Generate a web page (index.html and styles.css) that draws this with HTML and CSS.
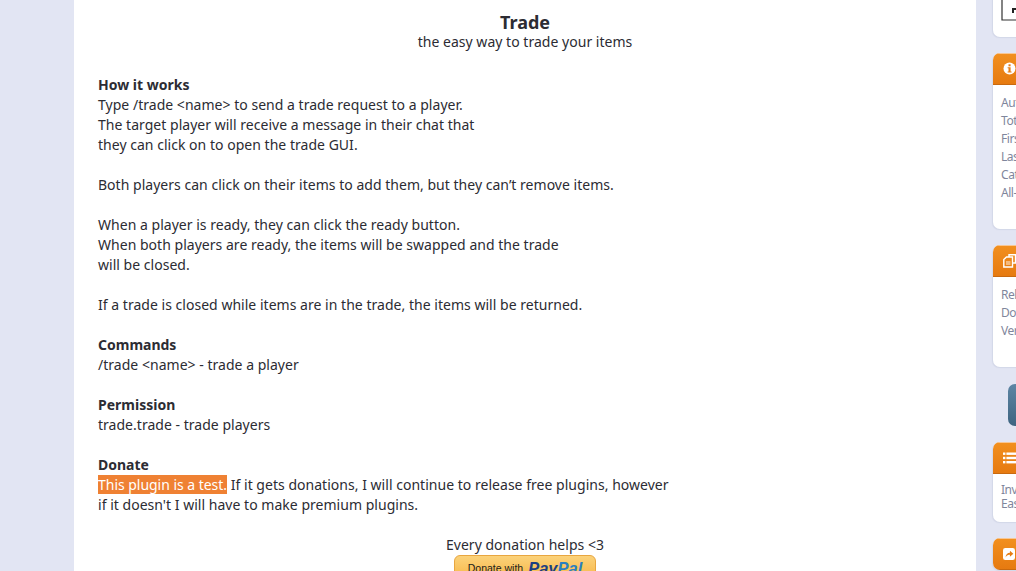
FILE: index.html
```html
<!DOCTYPE html>
<html lang="en">
<head>
<meta charset="utf-8">
<title>Trade</title>
<link rel="stylesheet" href="styles.css">
</head>
<body>
<div class="page">
  <main class="post">
    <div class="center intro">
      <div class="title">Trade</div>
      <div>the easy way to trade your items</div>
    </div>
    <br>
    <div><b>How it works</b></div>
    <div>Type /trade &lt;name&gt; to send a trade request to a player.</div>
    <div>The target player will receive a message in their chat that</div>
    <div>they can click on to open the trade GUI.</div>
    <br>
    <div>Both players can click on their items to add them, but they can’t remove items.</div>
    <br>
    <div>When a player is ready, they can click the ready button.</div>
    <div>When both players are ready, the items will be swapped and the trade</div>
    <div>will be closed.</div>
    <br>
    <div>If a trade is closed while items are in the trade, the items will be returned.</div>
    <br>
    <div><b>Commands</b></div>
    <div>/trade &lt;name&gt; - trade a player</div>
    <br>
    <div><b>Permission</b></div>
    <div>trade.trade - trade players</div>
    <br>
    <div><b>Donate</b></div>
    <div><span class="mark">This plugin is a test.</span> If it gets donations, I will continue to release free plugins, however</div>
    <div>if it doesn't I will have to make premium plugins.</div>
    <br>
    <div class="center">Every donation helps &lt;3</div>
    <div class="center donate-row">
      <div class="paypal"><span class="pp-label">Donate with</span> <span class="pp-logo"><i>Pay</i><i class="pal">Pal</i></span></div>
    </div>
  </main>
  <aside class="side">
    <section class="card card-top">
      <svg class="qr" width="24" height="21" viewBox="0 0 24 21"><path d="M1 0V20H24" fill="none" stroke="#333" stroke-width="1.2"/><path d="M11 8h13v2H13v3h-2z" fill="#222"/></svg>
    </section>
    <section class="card">
      <header class="head"><svg width="13" height="13" viewBox="0 0 13 13"><circle cx="6.5" cy="6.5" r="6" fill="#fff"/><path d="M4.6 5.2H7.6V9.6H8.6V10.6H4.6V9.6H5.5V6.2H4.6Z" fill="#e67d14"/><rect x="5.5" y="2.3" width="2.1" height="2" fill="#e67d14"/></svg></header>
      <div class="body tall">
        <div>Author:</div><div>Total Downloads:</div><div>First Release:</div><div>Last Update:</div><div>Category:</div><div>All-Time Rating:</div>
      </div>
    </section>
    <section class="card">
      <header class="head"><svg width="14" height="14" viewBox="0 0 14 14"><path d="M6 3V0.8H12.5V9H10" fill="none" stroke="#fff" stroke-width="1.4"/><path d="M0.8 5.5L3.5 3H9.5V13H0.8Z" fill="none" stroke="#fff" stroke-width="1.4"/><path d="M3 7H7.5V11H3Z" fill="#fff" fill-opacity=".45"/></svg></header>
      <div class="body mid">
        <div>Release:</div><div>Download:</div><div>Version:</div>
      </div>
    </section>
    <div class="btn-row"><div class="blue-btn"></div></div>
    <section class="card">
      <header class="head"><svg width="14" height="12" viewBox="0 0 14 12"><g fill="#fff"><rect x="0" y="0.5" width="2.4" height="2.4"/><rect x="0" y="4.8" width="2.4" height="2.4"/><rect x="0" y="9" width="2.4" height="2.4"/><rect x="3.4" y="0.5" width="11" height="2.4"/><rect x="3.4" y="4.8" width="11" height="2.4"/><rect x="3.4" y="9" width="11" height="2.4"/></g></svg></header>
      <div class="body low">
        <div>Inventory</div><div>Easy</div>
      </div>
    </section>
    <section class="card">
      <header class="head"><svg width="12" height="12" viewBox="0 0 13 13"><rect width="13" height="13" rx="2.5" fill="#fff"/><path d="M2.8 10.2C2.8 7 5 5.2 7.5 5.2V3L11.2 6.3 7.5 9.6V7.4C6 7.4 3.8 8 2.8 10.2Z" fill="#e67d14"/></svg></header>
    </section>
  </aside>
</div>
</body>
</html>
```
FILE: styles.css
```css
html, body {
  margin: 0;
  height: 100%;
  overflow: hidden;
  background: #e2e5f3;
}
.page {
  display: flex;
  align-items: flex-start;
  height: 571px;
  overflow: hidden;
  padding-left: 74px;
  font-family: "Noto Sans", sans-serif;
}
.post {
  flex: none;
  box-sizing: border-box;
  width: 902px;
  height: 571px;
  padding: 12px 24px 0;
  background: #fff;
  color: #2c2c33;
  font-size: 14px;
  line-height: 20px;
  letter-spacing: 0.025px;
  overflow: hidden;
}
.center { text-align: center; }
.intro { padding-bottom: 3px; }
.title { font-size: 18px; font-weight: 700; letter-spacing: 0; }
b { font-weight: 700; letter-spacing: 0; }
.mark { background: #ef8133; color: #fff; letter-spacing: -0.03px; }
.donate-row { display: flex; justify-content: center; }
.paypal {
  box-sizing: border-box;
  width: 142px;
  height: 26px;
  border: 1px solid #e8a640;
  border-radius: 6px;
  background: linear-gradient(#fbd27a, #f7b545);
  color: #1a1a1a;
  font-family: "Liberation Sans", sans-serif;
  font-size: 10.5px;
  line-height: 24px;
  display: flex;
  justify-content: center;
  gap: 5px;
  letter-spacing: 0;
}
.pp-logo { font-size: 16.5px; font-weight: 700; color: #1b3f82; line-height: 24px; }
.pp-logo .pal { color: #2a7fc0; }
.side {
  flex: none;
  margin: -24px 0 0 17px;
  width: 120px;
  display: flex;
  flex-direction: column;
  gap: 16px;
}
.card {
  background: #fff;
  border-radius: 7px;
  overflow: hidden;
  box-shadow: -1px 1px 1px #d3d7e8;
}
.card-top {
  height: 61px;
  padding: 24px 0 0 8px;
  box-sizing: border-box;
}
.qr { display: block; }
.head {
  height: 32px;
  background: linear-gradient(#f2901f, #e67a10);
  border-bottom: 1px solid #c9690f;
  box-shadow: inset 0 1px 0 #f8c795;
  box-sizing: border-box;
  padding-left: 10px;
  display: flex;
  align-items: center;
}
.body {
  padding: 9px 8px 8px;
  color: #7f869c;
  font-size: 12px;
  letter-spacing: -0.45px;
  line-height: 18px;
  box-sizing: border-box;
  white-space: nowrap;
}
.tall { height: 144px; }
.mid { height: 90px; }
.low { height: 48px; line-height: 14px; }
.btn-row { padding-left: 15px; margin-top: 1px; }
.blue-btn {
  height: 42px;
  border-radius: 7px;
  background: linear-gradient(#5d85a4, #3e6480);
}
```
